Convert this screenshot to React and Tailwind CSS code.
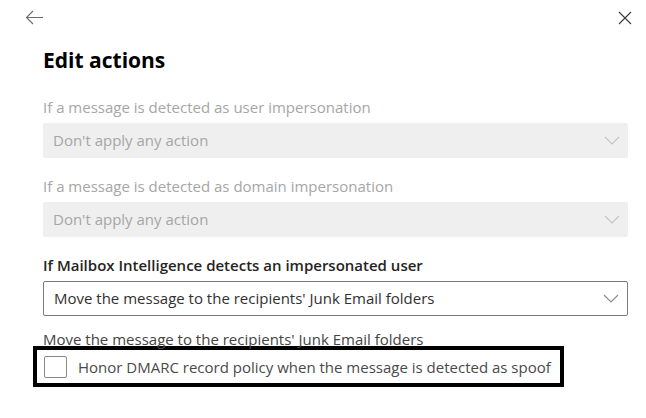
import React from "react";

function Chevron({ muted }) {
  return (
    <svg width="16" height="9" viewBox="0 0 16 9" fill="none" className="shrink-0">
      <path d="M1 1l7 7 7-7" stroke={muted ? "#c4c4c4" : "#8a8a8a"} strokeWidth="1.1" />
    </svg>
  );
}

function Field({ label, value, disabled }) {
  return (
    <div>
      <p
        className={`text-[15px] leading-[20px] ${
          disabled ? "text-[#a6a6a6]" : "font-semibold text-[#252423]"
        }`}
      >
        {label}
      </p>
      <div
        className={`mt-[6px] flex h-[35px] items-center justify-between rounded-[2px] pl-[10px] pr-[8px] text-[15px] ${
          disabled ? "bg-[#efefef] text-[#a6a6a6]" : "border border-[#7a7a7a] bg-white text-[#323130]"
        }`}
      >
        <span>{value}</span>
        <Chevron muted={disabled} />
      </div>
    </div>
  );
}

export default function App() {
  return (
    <div className="h-[418px] w-[646px] overflow-hidden bg-white font-['Open_Sans',sans-serif]">
      <div className="flex items-center justify-between pl-[25px] pr-[14px] pt-[10px]">
        <svg width="19" height="15" viewBox="0 0 19 15" fill="none">
          <path d="M18 7.5H1.5M8 1L1.5 7.5 8 14" stroke="#6b6b6b" strokeWidth="1.1" />
        </svg>
        <svg width="14" height="14" viewBox="0 0 14 14" fill="none">
          <path d="M1 1l12 12M13 1L1 13" stroke="#3b3b3b" strokeWidth="1.1" />
        </svg>
      </div>

      <div className="pl-[43px] pr-[18px]">
        <h1 className="mt-[20px] text-[21px] font-bold leading-[30px] text-black">Edit actions</h1>

        <div className="mt-[22px] flex flex-col gap-[18px]">
          <Field label="If a message is detected as user impersonation" value="Don't apply any action" disabled />
          <Field label="If a message is detected as domain impersonation" value="Don't apply any action" disabled />
          <Field
            label="If Mailbox Intelligence detects an impersonated user"
            value="Move the message to the recipients' Junk Email folders"
          />
        </div>

        <p className="mt-[13px] text-[15px] leading-[20px] text-[#444]">
          Move the message to the recipients' Junk Email folders
        </p>
      </div>

      <div className="ml-[33px] mt-[-3px] flex w-[531px] items-center gap-[11px] border-[4px] border-black pb-[5px] pl-[7px] pt-[6px]">
        <span className="h-[22px] w-[23px] rounded-[2px] border border-[#8a8886] bg-white" />
        <span className="text-[15px] leading-[20px] text-[#4a4a4a]">
          Honor DMARC record policy when the message is detected as spoof
        </span>
      </div>
    </div>
  );
}
